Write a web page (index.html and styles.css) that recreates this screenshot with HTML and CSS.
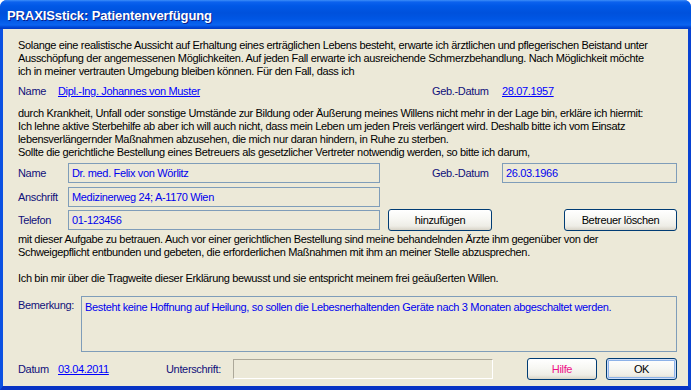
FILE: index.html
```html
<!DOCTYPE html>
<html lang="de">
<head>
<meta charset="utf-8">
<title>PRAXISstick: Patientenverfügung</title>
<link rel="stylesheet" href="styles.css">
</head>
<body>
<div class="window">
  <div class="titlebar"><span class="title">PRAXISstick: Patientenverfügung</span></div>
  <div class="client">
    <p class="para p1">Solange eine realistische Aussicht auf Erhaltung eines erträglichen Lebens besteht, erwarte ich ärztlichen und pflegerischen Beistand unter<br>Ausschöpfung der angemessenen Möglichkeiten. Auf jeden Fall erwarte ich ausreichende Schmerzbehandlung. Nach Möglichkeit möchte<br>ich in meiner vertrauten Umgebung bleiben können. Für den Fall, dass ich</p>
    <div class="info-row">
      <span class="label lw40">Name</span>
      <span class="slot name-slot"><a class="link" href="#">Dipl.-Ing. Johannes von Muster</a></span>
      <span class="label lw70">Geb.-Datum</span>
      <a class="link" href="#">28.07.1957</a>
    </div>
    <p class="para p2">durch Krankheit, Unfall oder sonstige Umstände zur Bildung oder Äußerung meines Willens nicht mehr in der Lage bin, erkläre ich hiermit:<br>Ich lehne aktive Sterbehilfe ab aber ich will auch nicht, dass mein Leben um jeden Preis verlängert wird. Deshalb bitte ich vom Einsatz<br>lebensverlängernder Maßnahmen abzusehen, die mich nur daran hindern, in Ruhe zu sterben.<br>Sollte die gerichtliche Bestellung eines Betreuers als gesetzlicher Vertreter notwendig werden, so bitte ich darum,</p>
    <div class="form">
      <div class="form-row r1">
        <span class="label lw50">Name</span>
        <div class="field wide">Dr. med. Felix von Wörlitz</div>
        <span class="label lw70 geb">Geb.-Datum</span>
        <div class="field date">26.03.1966</div>
      </div>
      <div class="form-row r2">
        <span class="label lw50">Anschrift</span>
        <div class="field wide">Medizinerweg 24; A-1170 Wien</div>
      </div>
      <div class="form-row r3">
        <span class="label lw50">Telefon</span>
        <div class="field wide">01-123456</div>
        <button class="btn add" type="button">hinzufügen</button>
        <button class="btn del" type="button">Betreuer löschen</button>
      </div>
    </div>
    <p class="para p3">mit dieser Aufgabe zu betrauen. Auch vor einer gerichtlichen Bestellung sind meine behandelnden Ärzte ihm gegenüber von der<br>Schweigepflicht entbunden und gebeten, die erforderlichen Maßnahmen mit ihm an meiner Stelle abzusprechen.<br>&nbsp;<br>Ich bin mir über die Tragweite dieser Erklärung bewusst und sie entspricht meinem frei geäußerten Willen.</p>
    <div class="remark-row">
      <span class="label lw63">Bemerkung:</span>
      <div class="field remark">Besteht keine Hoffnung auf Heilung, so sollen die Lebesnerhaltenden Geräte nach 3 Monaten abgeschaltet werden.</div>
    </div>
    <div class="bottom-row">
      <span class="label lw40">Datum</span>
      <span class="slot date-slot"><a class="link" href="#">03.04.2011</a></span>
      <span class="label sig-label">Unterschrift:</span>
      <div class="sig"></div>
      <button class="btn help" type="button">Hilfe</button>
      <button class="btn ok" type="button">OK</button>
    </div>
  </div>
</div>
</body>
</html>
```

FILE: styles.css
```css
* { box-sizing: border-box; }
html, body { margin: 0; padding: 0; background: #ffffff; }
body {
  font-family: "Liberation Sans", Arial, sans-serif;
  font-size: 11px;
  letter-spacing: -0.34px;
  color: #000000;
}
.window {
  width: 691px;
  height: 390px;
  display: flex;
  flex-direction: column;
  border-radius: 7px 7px 0 0;
  overflow: hidden;
  background: #0A4FE0;
}
.titlebar {
  height: 29px;
  flex: none;
  display: flex;
  align-items: center;
  padding-left: 7px;
  background: linear-gradient(to bottom, #3D8DF8 0px, #0C62EE 2px, #0058E6 6px, #0051DC 13px, #0056E4 19px, #0B64F0 25px, #0049D8 27px, #0038C4 29px);
}
.title {
  color: #ffffff;
  font-family: "Liberation Sans", Arial, sans-serif;
  font-weight: bold;
  font-size: 13px;
  letter-spacing: -0.1px;
  text-shadow: 1px 1px 0 #0A1E8A;
  margin-top: 1px;
}
.client {
  flex: 1;
  background: #ECE9D8;
  border-left: 3px solid #0B51E2;
  border-right: 3px solid #0842D2;
  border-bottom: 4px solid #0733C4;
  padding: 10px 11px 0 15px;
  display: flex;
  flex-direction: column;
}
.para {
  margin: 0;
  line-height: 13px;
  white-space: nowrap;
}
.label { color: #10107A; white-space: nowrap; flex: none; }
.lw40 { width: 40px; }
.lw50 { width: 50px; }
.lw63 { width: 63px; }
.lw70 { width: 70px; }
.slot { flex: none; white-space: nowrap; }
.name-slot { width: 374px; }
.date-slot { width: 108px; }
.link { color: #0000FF; text-decoration: underline; white-space: nowrap; }
.info-row {
  display: flex;
  align-items: center;
  height: 13px;
  margin-top: 6px;
}
.p2 { margin-top: 10px; }
.form { display: flex; flex-direction: column; margin-top: 4px; }
.form-row { display: flex; align-items: center; }
.r1 { height: 20px; }
.r2 { height: 20px; margin-top: 4px; }
.r3 { height: 22px; margin-top: 2px; }
.field {
  height: 20px;
  border: 1px solid #7F9DB9;
  background: #ECE9D8;
  color: #0000EE;
  line-height: 18px;
  padding-left: 3px;
  white-space: nowrap;
  flex: none;
}
.wide { width: 312px; }
.form-row .geb { margin-left: 52px; }
.date { width: 175px; }
.btn {
  font-family: "Liberation Sans", Arial, sans-serif;
  font-size: 11px;
  letter-spacing: inherit;
  color: #000000;
  height: 22px;
  border: 1px solid #003C74;
  border-radius: 3px;
  background: linear-gradient(to bottom, #FFFFFF 0%, #F7F7F3 45%, #EEEDE6 80%, #D8D4C8 100%);
  padding: 0;
  flex: none;
}
.add { width: 104px; margin-left: 8px; }
.del { width: 113px; margin-left: auto; }
.p3 { margin-top: 2px; }
.remark-row { display: flex; align-items: flex-start; margin-top: 11px; }
.remark-row .label { margin-top: 3px; }
.remark { width: 596px; height: 56px; line-height: 13px; padding: 4px 3px; }
.bottom-row { display: flex; align-items: center; height: 22px; margin-top: 6px; }
.sig-label { width: 67px; }
.sig {
  width: 260px;
  height: 20px;
  border-top: 1px solid #ACA899;
  border-left: 1px solid #ACA899;
  border-right: 1px solid #FFFFFF;
  border-bottom: 1px solid #FFFFFF;
  background: #ECE9D8;
  flex: none;
}
.help { width: 70px; margin-left: 34px; color: #EE1188; }
.ok {
  width: 71px;
  margin-left: 9px;
  box-shadow: inset 0 0 0 1px #CEDDF8, inset 0 0 0 2px #8DB2E8;
}
```
